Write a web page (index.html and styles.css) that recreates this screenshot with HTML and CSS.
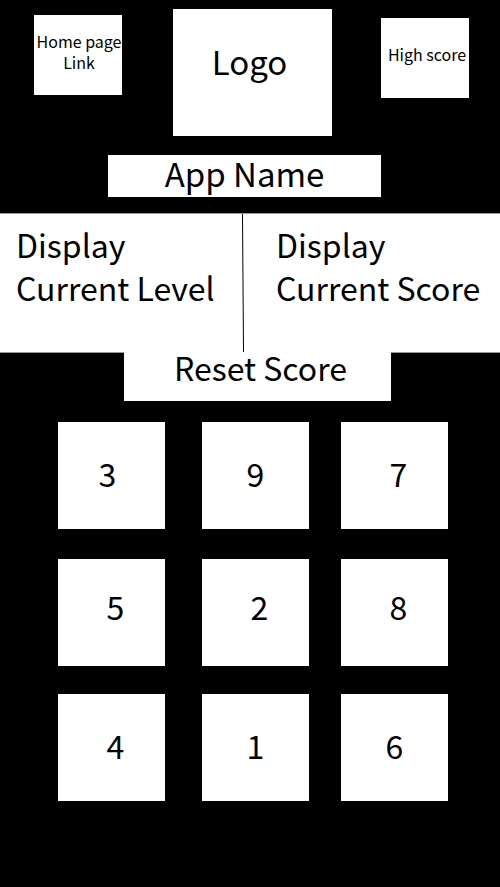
FILE: index.html
```html
<!DOCTYPE html>
<html lang="en">
<head>
<meta charset="utf-8">
<meta name="viewport" content="width=device-width, initial-scale=1">
<title>App Name</title>
<link rel="stylesheet" href="styles.css">
</head>
<body>
<header class="top">
  <a class="tile home" href="#">Home page<br>Link</a>
  <div class="logo">Logo</div>
  <a class="tile high" href="#">High score</a>
</header>
<main>
  <h1 class="name">App Name</h1>
  <section class="status">
    <p class="panel">Display<br>Current Level</p>
    <svg class="divider" viewBox="0 0 2 138" preserveAspectRatio="none" aria-hidden="true"><path d="M.5 0L1.5 138" stroke="#000" stroke-width="1"/></svg>
    <p class="panel score">Display<br>Current Score</p>
  </section>
  <button class="reset" type="button">Reset Score</button>
  <section class="keypad">
    <button class="key lean-left" type="button">3</button>
    <button class="key" type="button">9</button>
    <button class="key lean-right" type="button">7</button>
    <button class="key raised lean-right" type="button">5</button>
    <button class="key raised lean-right" type="button">2</button>
    <button class="key raised lean-right" type="button">8</button>
    <button class="key lean-right" type="button">4</button>
    <button class="key" type="button">1</button>
    <button class="key" type="button">6</button>
  </section>
</main>
</body>
</html>
```
FILE: styles.css
```css
* {
  box-sizing: border-box;
}

body {
  margin: 0;
  min-height: 100vh;
  background: #000;
  color: #000;
  font: 32px/43px "Noto Sans CJK JP", "Noto Sans", sans-serif;
}

a {
  color: inherit;
  text-decoration: none;
}

button {
  border: 0;
  border-radius: 0;
  background: #fff;
  color: inherit;
  font: inherit;
}

.top {
  display: grid;
  grid-template-columns: 34fr 88fr 51fr 159fr 49fr 88fr 31fr;
  align-items: start;
  padding-top: 9px;
}

.tile {
  min-height: 80px;
  background: #fff;
  font-size: 16px;
  line-height: 21px;
  text-align: center;
  white-space: nowrap;
  overflow: hidden;
}

.home {
  grid-column: 2;
  margin-top: 6px;
  padding: 16px 0 0 2px;
}

.logo {
  grid-column: 4;
  min-height: 127px;
  padding: 31px 6px 0 0;
  background: #fff;
  font-size: 33px;
  text-align: center;
}

.high {
  grid-column: 6;
  margin-top: 9px;
  padding: 26px 0 0 4px;
}

.name {
  width: 54.6%;
  margin: 19px auto 16px 21.6%;
  padding-bottom: 5px;
  background: #fff;
  font: inherit;
  font-size: 33px;
  line-height: 37px;
  text-align: center;
}

.status {
  display: grid;
  grid-template-columns: 242fr 2px 256fr;
  border: solid #999;
  border-width: 1px 0;
  background: #fff;
}

.panel {
  min-height: 138px;
  margin: 0;
  padding: 9px 0 0 16px;
  white-space: nowrap;
}

.score {
  padding-left: 32px;
}

.divider {
  width: 2px;
  height: 138px;
}

.reset {
  display: block;
  position: relative;
  width: 53.4%;
  margin: -1px auto 21px 24.8%;
  padding: 0 0 19px 6px;
  line-height: 30px;
}

.keypad {
  display: grid;
  grid-template-columns: 107fr 37fr 107fr 32fr 107fr;
  grid-template-rows: auto 30px auto 28px auto;
  padding: 0 10.4% 86px 11.6%;
}

.key {
  aspect-ratio: 1;
  padding: 0 0 4px;
}

.key:nth-child(3n + 1) { grid-column: 1; }
.key:nth-child(3n + 2) { grid-column: 3; }
.key:nth-child(3n) { grid-column: 5; }
.key:nth-child(n + 1) { grid-row: 1; }
.key:nth-child(n + 4) { grid-row: 3; }
.key:nth-child(n + 7) { grid-row: 5; }

.lean-left { padding-right: 8px; }
.lean-right { padding-left: 8px; }
.raised { padding-bottom: 12px; }
```
